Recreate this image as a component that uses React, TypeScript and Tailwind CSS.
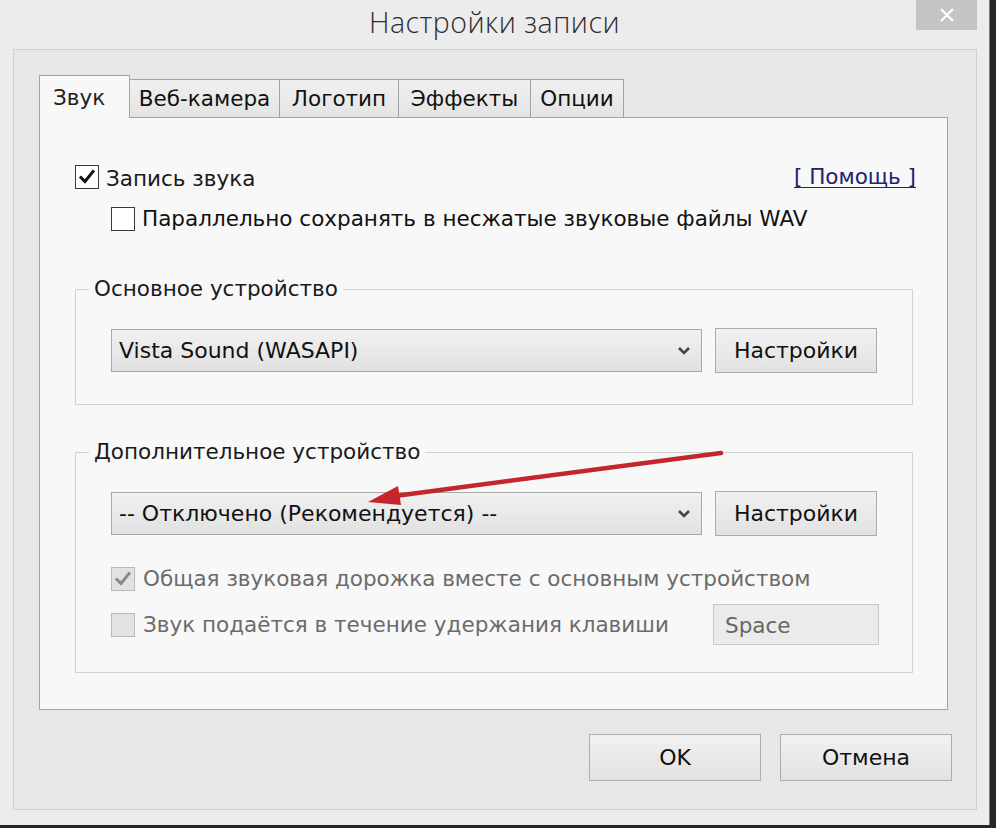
import React from "react";

const FONT = { fontFamily: '"DejaVu Sans", "Noto Sans", sans-serif' };

function Check({ checked, disabled }: { checked?: boolean; disabled?: boolean }) {
  return (
    <div
      className={
        "w-[24px] h-[24px] shrink-0 border flex items-center justify-center " +
        (disabled ? "border-[#b9b9b9] bg-[#e2e2e2]" : "border-[#3a3a3a] bg-white")
      }
    >
      {checked && (
        <svg width="18" height="18" viewBox="0 0 18 18">
          <path
            d="M3 9.5 L7 13.5 L15 3.5"
            fill="none"
            stroke={disabled ? "#8a8a8a" : "#111"}
            strokeWidth="3"
            strokeLinecap="square"
          />
        </svg>
      )}
    </div>
  );
}

function Chevron() {
  return (
    <svg width="14" height="10" viewBox="0 0 14 10">
      <path d="M2 2 L7 7 L12 2" fill="none" stroke="#444" strokeWidth="2.6" />
    </svg>
  );
}

function Dropdown({ text }: { text: string }) {
  return (
    <div className="w-[591px] h-[43px] border border-[#a9a9a9] bg-gradient-to-b from-[#f1f1f1] to-[#e1e1e1] flex items-center pl-[7px] pr-[10px]">
      <span className="flex-1 text-[22px] text-[#111] whitespace-nowrap">{text}</span>
      <Chevron />
    </div>
  );
}

function Btn({ text, w, h }: { text: string; w: string; h: string }) {
  return (
    <div
      className={
        w +
        " " +
        h +
        " border border-[#acacac] bg-gradient-to-b from-[#f1f1f1] to-[#e2e2e2] flex items-center justify-center text-[22px] text-[#111]"
      }
    >
      {text}
    </div>
  );
}

export default function App() {
  return (
    <div className="relative w-[996px] h-[828px] bg-[#262626] overflow-hidden" style={FONT}>
      <div className="w-[990px] h-[825px] bg-[#ececec] flex flex-col pl-[13px] pr-[12px] pb-[15px] border-r border-[#7a7a7a]">
        {/* title bar */}
        <div className="h-[49px] flex shrink-0">
          <div className="w-[60px]" />
          <div
            className="flex-1 text-center text-[28.5px] text-[#2e2e2e] pt-[1px] font-light tracking-[0.5px]"
            style={{ fontFamily: '"Open Sans", "Noto Sans", sans-serif' }}
          >
            Настройки записи
          </div>
          <div className="w-[61px] h-[30px] bg-[#c4c4c4] flex items-center justify-center">
            <svg width="16" height="16" viewBox="0 0 16 16">
              <path d="M2 2 L14 14 M14 2 L2 14" stroke="#fff" strokeWidth="2.2" />
            </svg>
          </div>
        </div>
        {/* client */}
        <div className="flex-1 border border-[#cfcfcf] bg-[#e7e7e7] pl-[25px] pr-[24px] pt-[25px] flex flex-col">
          {/* tabs */}
          <div className="flex items-end h-[42px] text-[21.5px] text-[#111]">
            <div className="relative z-10 w-[91px] h-[43px] -mb-px border border-b-0 border-[#a3a3a3] bg-[#f8f8f8] flex items-start pt-[6px] pl-[13px] text-[#222]">
              Звук
            </div>
            <div className="-ml-px w-[151px] h-[38px] border border-b-0 border-[#a3a3a3] bg-gradient-to-b from-[#f0f0f0] to-[#e4e4e4] flex items-center justify-center pt-[2px]">
              Веб-камера
            </div>
            <div className="-ml-px w-[120px] h-[38px] border border-b-0 border-[#a3a3a3] bg-gradient-to-b from-[#f0f0f0] to-[#e4e4e4] flex items-center justify-center pt-[2px]">
              Логотип
            </div>
            <div className="-ml-px w-[133px] h-[38px] border border-b-0 border-[#a3a3a3] bg-gradient-to-b from-[#f0f0f0] to-[#e4e4e4] flex items-center justify-center pt-[2px]">
              Эффекты
            </div>
            <div className="-ml-px w-[94px] h-[38px] border border-b-0 border-[#a3a3a3] bg-gradient-to-b from-[#f0f0f0] to-[#e4e4e4] flex items-center justify-center pt-[2px]">
              Опции
            </div>
          </div>
          {/* panel */}
          <div className="w-[909px] h-[593px] border border-[#a3a3a3] bg-[#f8f8f8] flex flex-col pl-[35px] pr-[34px] text-[21.5px] text-[#111]">
            <div className="mt-[47px] h-[24px] flex items-center">
              <Check checked />
              <span className="ml-[7px] mt-[4px] flex-1 text-[#1a1a1a]">Запись звука</span>
              <span className="text-[#22226e] underline decoration-1 underline-offset-[3px] mr-[-3px] whitespace-pre">[ Помощь ]</span>
            </div>
            <div className="mt-[18px] h-[24px] flex items-center pl-[36px]">
              <Check />
              <span className="ml-[7px] whitespace-nowrap">Параллельно сохранять в несжатые звуковые файлы WAV</span>
            </div>

            {/* group 1 */}
            <div className="mt-[58px] border border-[#d2d2d2] flex flex-col pl-[35px] pb-[31px]">
              <div className="-mt-[14px] h-[26px] self-start -ml-[22px] px-[5px] bg-[#f8f8f8] leading-[26px] text-[#1a1a1a]">
                Основное устройство
              </div>
              <div className="mt-[26px] flex items-center gap-[13px]">
                <Dropdown text="Vista Sound (WASAPI)" />
                <Btn text="Настройки" w="w-[162px]" h="h-[45px]" />
              </div>
            </div>

            {/* group 2 */}
            <div className="mt-[47px] border border-[#d2d2d2] flex flex-col pl-[35px] pb-[27px]">
              <div className="-mt-[14px] h-[26px] self-start -ml-[22px] px-[5px] bg-[#f8f8f8] leading-[26px] text-[#1a1a1a]">
                Дополнительное устройство
              </div>
              <div className="mt-[26px] flex items-center gap-[13px]">
                <Dropdown text="-- Отключено (Рекомендуется) --" />
                <Btn text="Настройки" w="w-[162px]" h="h-[45px]" />
              </div>
              <div className="mt-[31px] h-[24px] flex items-center text-[#6b6b6b]">
                <Check checked disabled />
                <span className="ml-[8px] whitespace-nowrap">Общая звуковая дорожка вместе с основным устройством</span>
              </div>
              <div className="mt-[13px] h-[41px] flex items-start text-[#6b6b6b]">
                <div className="mt-[5px] flex items-center w-[602px]">
                  <Check disabled />
                  <span className="ml-[8px] whitespace-nowrap">Звук подаётся в течение удержания клавиши</span>
                </div>
                <div className="w-[166px] h-[41px] border border-[#c8c8c8] bg-[#ebebeb] flex items-center pl-[11px] pt-[3px] text-[#666]">
                  Space
                </div>
              </div>
            </div>
          </div>
          {/* bottom buttons */}
          <div className="mt-[24px] flex justify-end gap-[19px]">
            <Btn text="OK" w="w-[172px]" h="h-[47px]" />
            <Btn text="Отмена" w="w-[172px]" h="h-[47px]" />
          </div>
        </div>
      </div>

      {/* red annotation arrow */}
      <svg className="absolute left-0 top-0 pointer-events-none" width="996" height="828" viewBox="0 0 996 828">
        <line x1="721" y1="453" x2="395" y2="496" stroke="#c4262b" strokeWidth="4.5" strokeLinecap="round" />
        <path d="M368 502 L398 486 L401 505 Z" fill="#c4262b" />
      </svg>
    </div>
  );
}
